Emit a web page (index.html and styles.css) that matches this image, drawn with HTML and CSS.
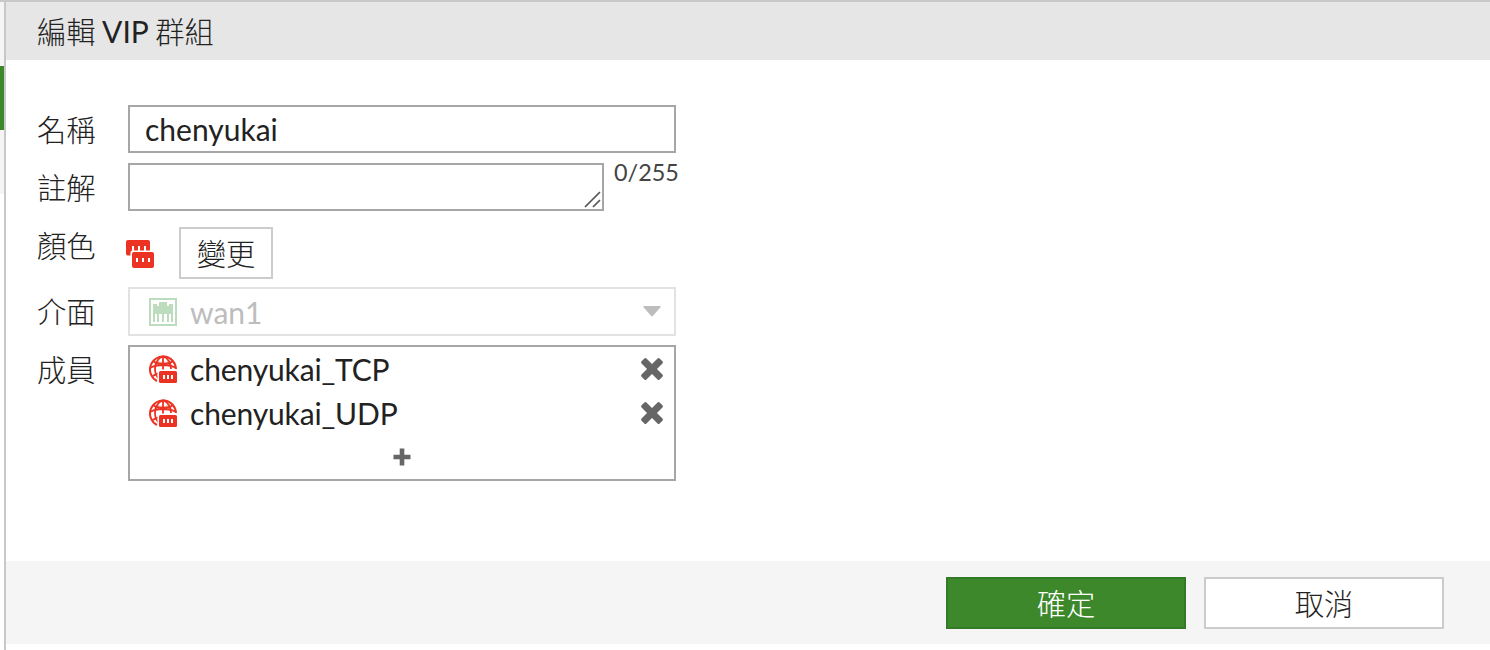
FILE: index.html
```html
<!DOCTYPE html>
<html lang="zh-Hant">
<head>
<meta charset="utf-8">
<title>編輯 VIP 群組</title>
<link rel="stylesheet" href="styles.css">
</head>
<body>
<svg class="symbols" aria-hidden="true">
  <symbol id="vip" viewBox="0 0 28 28">
    <path fill="none" stroke="#ec3323" stroke-width="2" d="M8 26A13 13 0 1 1 27 14"/>
    <path fill="none" stroke="#ec3323" stroke-width="1.8" d="M14 1C8 4 6 9 6 14c0 5 2 8 4 10M14 1c6 3 8 8 8 13M14 1v14M4 6c5 4 15 4 20 0M1 13c7-4 19-4 26 0M4 21c2-2 4-2 6-3"/>
    <path fill="#ec3323" fill-opacity=".45" d="M8 6q6 2 12 0l2 5q-8-2-16 0z"/>
    <rect x="8.5" y="14.500" width="20" height="14" rx="2" fill="#fff"/>
    <rect x="10" y="16" width="18" height="12" rx="1.5" fill="#ec3323"/>
    <path fill="#fff" d="M14 20h2v4h-2zM18 20h2v4h-2zM22 20h2v4h-2z"/>
  </symbol>
  <symbol id="cross" viewBox="0 0 24 24">
    <g fill="#666" transform="rotate(45 12 12)">
      <rect x="-.8" y="8.500" width="25.600" height="7" rx="1.500"/>
      <rect x="8.500" y="-.8" width="7" height="25.600" rx="1.500"/>
    </g>
  </symbol>
</svg>
<div class="app">
  <aside class="rail"><div class="rail-active"></div></aside>
  <main class="panel">
    <header class="title">編輯 <span class="latin">VIP</span> 群組</header>
    <form class="form">
      <div class="row">
        <label class="label">名稱</label>
        <div class="field name">chenyukai</div>
      </div>
      <div class="row">
        <label class="label">註解</label>
        <div class="field comment">
          <svg class="grip" width="18" height="18" viewBox="0 0 18 18"><path stroke="#555" stroke-width="1.7" d="M1 17L16 2M9 17l7-7"/></svg>
        </div>
        <span class="count">0/255</span>
      </div>
      <div class="row color-row">
        <label class="label">顏色</label>
        <svg class="group-icon" width="28" height="28" viewBox="0 0 28 28">
          <rect width="24" height="15.5" rx="2" fill="#ec3323"/>
          <path fill="#fff" d="M6 6h2v5H6zM12 6h2v5h-2zM18 6h2v5h-2z"/>
          <rect x="4.5" y="10.5" width="25" height="19" rx="2" fill="#fff"/>
          <rect x="6" y="12" width="22" height="16" rx="2" fill="#ec3323"/>
          <path fill="#fff" d="M10 18h2v4h-2zM16 18h2v4h-2zM22 18h2v4h-2z"/>
        </svg>
        <button type="button" class="btn change">變更</button>
      </div>
      <div class="row interface-row">
        <label class="label">介面</label>
        <div class="field select">
          <svg class="icon" width="28" height="28" viewBox="0 0 28 28">
            <path fill="none" stroke="#bddcbd" stroke-width="2" d="M1 1h26v26H1z"/>
            <path fill="#bddcbd" d="M4 6h4v2h2V4h8v4h2V6h4v18h-2v-8h-2v8h-2v-8h-3v8h-2v-8h-3v8h-2v-8H6v8H4z"/>
          </svg>
          <span class="value">wan1</span>
          <svg class="caret" width="18" height="11" viewBox="0 0 18 11"><path fill="#bdbdbd" d="M1 0h16q1.500 0 .5 1.300L10 9.800q-1 1.200-2 0L.5 1.300Q-.5 0 1 0z"/></svg>
        </div>
      </div>
      <div class="row members-row">
        <label class="label">成員</label>
        <div class="field members">
          <div class="member"><svg class="icon" width="28" height="28"><use href="#vip"/></svg><span class="value">chenyukai_TCP</span><svg class="remove" width="24" height="24"><use href="#cross"/></svg></div>
          <div class="member"><svg class="icon" width="28" height="28"><use href="#vip"/></svg><span class="value">chenyukai_UDP</span><svg class="remove" width="24" height="24"><use href="#cross"/></svg></div>
          <div class="add"><svg width="18" height="18" viewBox="0 0 18 18"><path stroke="#666" stroke-width="4.600" d="M9 .5v17M.5 9h17"/></svg></div>
        </div>
      </div>
    </form>
    <footer class="footer">
      <button type="button" class="btn ok">確定</button>
      <button type="button" class="btn cancel">取消</button>
    </footer>
  </main>
</div>
</body>
</html>
```
FILE: styles.css
```css
* { box-sizing: border-box; }
body {
  margin: 0;
  background: #fff;
  color: #222;
  font: 300 29.3px/44px "Noto Sans CJK TC", sans-serif;
}
.symbols { position: absolute; width: 0; height: 0; }
svg { display: block; flex: none; }
.app { display: flex; height: 650px; border-top: 2px solid #c8c8c8; overflow: hidden; }
.rail { width: 4px; height: 192px; padding-top: 64px; background: #f5f5f5; }
.rail-active { height: 64px; background: #3c882b; }
.panel { flex: 1; display: flex; flex-direction: column; border-left: 2px solid #c8c8c8; }
.title { height: 58px; padding: 6px 31px; background: #e6e6e6; white-space: pre; }
.latin { font-family: Lato, sans-serif; font-weight: 400; font-size: 30px; line-height: 1; }
.form { height: 501px; padding: 45px 31px 0; }
.row { display: flex; height: 48px; margin-bottom: 10px; }
.label { width: 91px; padding-top: 1px; white-space: nowrap; }
.field { border: 2px solid #a6a6a6; font-family: Lato, sans-serif; font-weight: 400; font-size: 30px; width: 548px; }
.name { padding-left: 15px; line-height: 44px; }
.comment { width: 476px; display: flex; align-items: flex-end; justify-content: flex-end; padding: 0 0 1px; }
.count { padding-left: 10px; font: 400 23.4px/18px Lato, sans-serif; color: #444; white-space: nowrap; }
.color-row { height: 58px; margin-bottom: 8px; }
.color-row .label { width: 89px; }
.group-icon { margin: 19px 25px 0 0; }
.btn {
  border: 2px solid #ccc;
  background: #fff;
  color: #222;
  padding: 0 0 3px;
  font: 300 29.3px/44px "Noto Sans CJK TC", sans-serif;
}
.change { width: 94px; height: 52px; margin-top: 6px; }
.interface-row { height: 49px; margin-bottom: 9px; }
.select { display: flex; align-items: center; padding: 0 13px 0 19px; border-color: #e2e2e2; color: #bdbdbd; }
.icon { margin-right: 13px; }
.value { flex: 1; line-height: 44px; }
.members-row { height: 136px; }
.members { padding: 0; letter-spacing: -0.15px; }
.member { display: flex; height: 44px; align-items: center; padding: 0 10px 0 19px; }
.add { display: flex; height: 44px; align-items: center; justify-content: center; }
.footer { height: 83px; display: flex; justify-content: flex-end; gap: 18px; padding: 16px 46px 0; background: #f5f5f5; }
.ok, .cancel { width: 240px; height: 52px; }
.ok { background: #3c882b; border-color: #327a25; color: #fff; }
```
